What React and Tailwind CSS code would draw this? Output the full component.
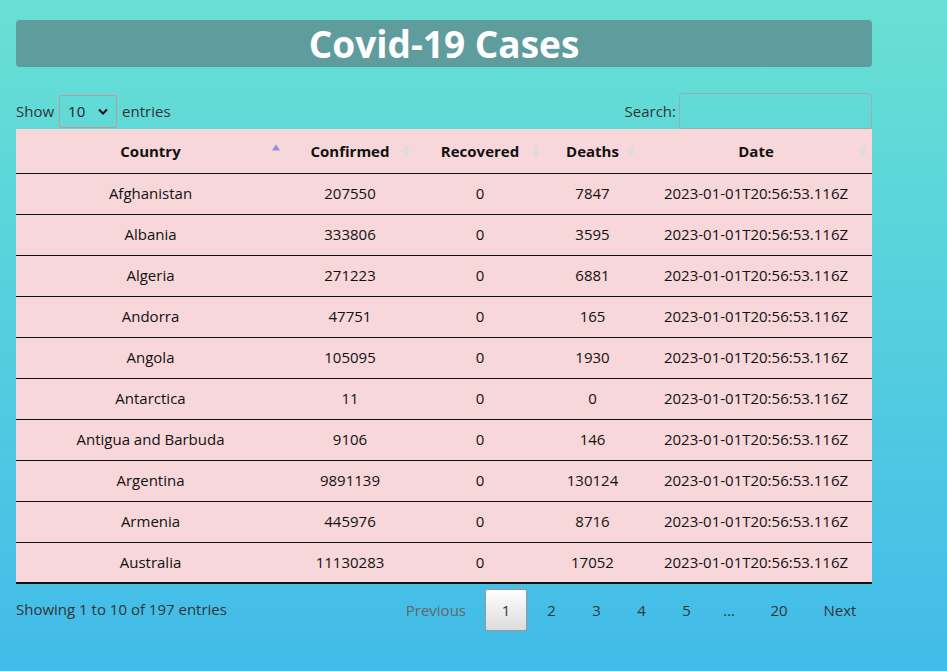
const rows = [
  ['Afghanistan', '207550', '0', '7847'],
  ['Albania', '333806', '0', '3595'],
  ['Algeria', '271223', '0', '6881'],
  ['Andorra', '47751', '0', '165'],
  ['Angola', '105095', '0', '1930'],
  ['Antarctica', '11', '0', '0'],
  ['Antigua and Barbuda', '9106', '0', '146'],
  ['Argentina', '9891139', '0', '130124'],
  ['Armenia', '445976', '0', '8716'],
  ['Australia', '11130283', '0', '17052'],
];

const date = '2023-01-01T20:56:53.116Z';

function SortIcon({ active }) {
  return (
    <span className="absolute right-[5px] top-1/2 -translate-y-1/2 flex flex-col items-center gap-[1px]">
      <span
        className={
          'block w-0 h-0 border-l-[4px] border-r-[4px] border-b-[6px] border-l-transparent border-r-transparent ' +
          (active ? 'border-b-[#8a8ee6]' : 'border-b-[#dcdcdc]')
        }
      />
      <span
        className={
          'block w-0 h-0 border-l-[4px] border-r-[4px] border-t-[6px] border-l-transparent border-r-transparent ' +
          (active ? 'border-t-transparent' : 'border-t-[#dcdcdc]')
        }
      />
    </span>
  );
}

const headers = [
  { label: 'Country', w: 'w-[269px]', active: true },
  { label: 'Confirmed', w: 'w-[130px]' },
  { label: 'Recovered', w: 'w-[130px]' },
  { label: 'Deaths', w: 'w-[95px]' },
  { label: 'Date', w: 'w-[232px]' },
];

export default function App() {
  return (
    <div
      className="min-h-[671px] w-full bg-gradient-to-b from-[#68e0d3] to-[#41bbe9] text-[#333] text-[15px]"
      style={{ fontFamily: '"Open Sans", "Noto Sans", sans-serif' }}
    >
      <div className="w-[856px] ml-4 pt-5">
        <h1 className="h-[47px] rounded-[4px] bg-[#5f9c9d] text-white text-[37px] font-bold flex items-center justify-center leading-none">
          Covid-19 Cases
        </h1>

        <div className="flex items-center justify-between mt-[26px] h-[36px]">
          <label className="flex items-center gap-[5px]">
            Show
            <span className="relative flex items-center w-[58px] h-[33px] border border-[#b89c9e] rounded-[3px] px-2 text-[#222]">
              10
              <svg className="absolute right-[8px]" width="10" height="7" viewBox="0 0 10 7">
                <path d="M1 1.5 L5 5.5 L9 1.5" fill="none" stroke="#111" strokeWidth="2" />
              </svg>
            </span>
            entries
          </label>
          <label className="flex items-center gap-[3px]">
            Search:
            <span className="block w-[193px] h-[36px] border border-[#98adad] rounded-[3px]" />
          </label>
        </div>

        <table className="w-full bg-[#f8d7da] text-[#111] border-collapse border-b-2 border-b-[#111]">
          <thead>
            <tr className="h-[44px] border-b border-b-[#111]">
              {headers.map((h) => (
                <th key={h.label} className={'relative font-bold text-center ' + h.w}>
                  {h.label}
                  <SortIcon active={h.active} />
                </th>
              ))}
            </tr>
          </thead>
          <tbody>
            {rows.map((r, i) => (
              <tr key={r[0]} className={'h-[41px] ' + (i < rows.length - 1 ? 'border-b border-b-[#111]' : '')}>
                <td className="text-center">{r[0]}</td>
                <td className="text-center">{r[1]}</td>
                <td className="text-center">{r[2]}</td>
                <td className="text-center">{r[3]}</td>
                <td className="text-center">{date}</td>
              </tr>
            ))}
          </tbody>
        </table>

        <div className="flex items-center justify-between mt-[5px]">
          <div className="text-[#333] -mt-[1px]">Showing 1 to 10 of 197 entries</div>
          <div className="flex items-center mr-[1px]">
            <span className="px-[13px] text-[#666]">Previous</span>
            <span className="ml-[6px] mr-[2px] w-[42px] h-[42px] flex items-center justify-center rounded-[2px] border border-[#979797] bg-gradient-to-b from-white to-[#dcdcdc]">
              1
            </span>
            {['2', '3', '4', '5'].map((n) => (
              <span key={n} className="w-[45px] text-center">{n}</span>
            ))}
            <span className="w-[40px] text-center">…</span>
            <span className="w-[60px] text-center">20</span>
            <span className="w-[62px] text-center">Next</span>
          </div>
        </div>
      </div>
    </div>
  );
}
